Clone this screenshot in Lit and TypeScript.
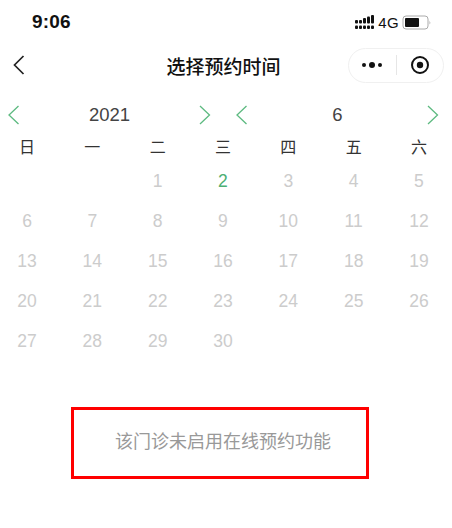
import { LitElement, html, css, svg } from "lit";
import { customElement } from "lit/decorators.js";

const chevL = svg`<path d="M10.5 1 L1 10 L10.5 19" fill="none" stroke="#5dba80" stroke-width="1.3"/>`;
const chevR = svg`<path d="M1 1 L10.5 10 L1 19" fill="none" stroke="#5dba80" stroke-width="1.3"/>`;

@customElement("app-root")
export class AppRoot extends LitElement {
  static styles = css`
    :host { display: block; width: 452px; height: 528px; background: #fff; overflow: hidden;
      font-family: "Liberation Sans", "Noto Sans CJK SC", sans-serif; }
    .status { height: 44px; display: flex; align-items: center; box-sizing: border-box; padding: 0 20px 0 32px; }
    .time { font-size: 19px; font-weight: 700; color: #111; letter-spacing: 0.2px; flex: 1; }
    .status-right { display: flex; align-items: center; }
    .net { font-size: 15px; color: #111; letter-spacing: 0.4px; margin: 0 3px 0 4px; }
    .nav { height: 44px; margin-top: -1px; display: flex; align-items: center; box-sizing: border-box; padding: 0 8px 0 13px; position: relative; }
    .nav .spacer { flex: 1; }
    .title { position: absolute; left: 0; right: 0; text-align: center; font-size: 19px; font-weight: 500; color: #111; padding-right: 5px; }
    .capsule { box-sizing: border-box; width: 96px; height: 35px; border: 1px solid #f0f0f0; border-radius: 18px; display: flex; align-items: center; position: relative; background: #fff; }
    .capsule .half { flex: 1; display: flex; justify-content: center; align-items: center; }
    .capsule .sep { width: 1px; height: 20px; background: #e6e6e6; }
    .pickers { display: flex; height: 38px; align-items: center; margin-top: 9px; padding: 0 8px; }
    .picker { display: flex; align-items: center; justify-content: space-between; width: 203px; }
    .picker + .picker { margin-left: 25px; }
    .picker span { font-size: 18.5px; color: #444; }
    .grid { display: grid; grid-template-columns: repeat(7, 54px); column-gap: 11.33px; grid-template-rows: 28px; grid-auto-rows: 39.9px; }
    .cell { display: flex; align-items: center; justify-content: center; font-size: 17.5px; color: #ccc; }
    .head { box-sizing: border-box; padding-bottom: 4px; color: #333; font-size: 16px; }
    .today { color: #4caf73; }
    .notice { box-sizing: border-box; width: 298px; height: 72px; margin: 46px 0 0 71px; border: 3px solid #f00; display: flex; align-items: center; justify-content: center; color: #999; font-size: 18px; padding: 0 0 6px 6px; }
  `;

  render() {
    const heads = ["日", "一", "二", "三", "四", "五", "六"];
    const days: string[] = ["", "", ...Array.from({ length: 30 }, (_, i) => String(i + 1))];
    return html`
      <div class="status">
        <div class="time">9:06</div>
        <div class="status-right">
          <svg width="19" height="15" viewBox="0 0 19 15" fill="#111">
            <rect x="0" y="5" width="3" height="3.6" rx="1"/><rect x="0" y="10.5" width="3" height="3.6" rx="1"/>
            <rect x="4" y="5" width="3" height="3.6" rx="1"/><rect x="4" y="10.5" width="3" height="3.6" rx="1"/>
            <rect x="8" y="3" width="3" height="5.6" rx="1"/><rect x="8" y="10.5" width="3" height="3.6" rx="1"/>
            <rect x="12" y="1.5" width="3" height="7.1" rx="1"/><rect x="12" y="10.5" width="3" height="3.6" rx="1"/>
            <rect x="16" y="0" width="3" height="8.6" rx="1"/><rect x="16" y="10.5" width="3" height="3.6" rx="1"/>
          </svg>
          <span class="net">4G</span>
          <svg width="30" height="15" viewBox="0 0 30 15">
            <rect x="1" y="1" width="25" height="13" rx="3" fill="none" stroke="#aaa" stroke-width="1"/>
            <rect x="3" y="3" width="14" height="9" rx="1" fill="#111"/>
            <path d="M27.5 5.5 q1.5 2 0 4z" fill="#aaa"/>
          </svg>
        </div>
      </div>
      <div class="nav">
        <svg width="12" height="20" viewBox="0 0 12 20"><path d="M10.5 1 L1.5 10 L10.5 19" fill="none" stroke="#222" stroke-width="1.7"/></svg>
        <div class="title">选择预约时间</div>
        <div class="spacer"></div>
        <div class="capsule">
          <div class="half">
            <svg width="22" height="8" viewBox="0 0 22 8" fill="#111"><circle cx="3" cy="4" r="2"/><circle cx="11" cy="4" r="3"/><circle cx="19" cy="4" r="2"/></svg>
          </div>
          <div class="sep"></div>
          <div class="half">
            <svg width="20" height="20" viewBox="0 0 20 20"><circle cx="10" cy="10" r="8" fill="none" stroke="#111" stroke-width="2"/><circle cx="10" cy="10" r="3.2" fill="#111"/></svg>
          </div>
        </div>
      </div>
      <div class="pickers">
        <div class="picker">
          <svg width="12" height="20" viewBox="0 0 12 20">${chevL}</svg>
          <span>2021</span>
          <svg width="12" height="20" viewBox="0 0 12 20">${chevR}</svg>
        </div>
        <div class="picker">
          <svg width="12" height="20" viewBox="0 0 12 20">${chevL}</svg>
          <span>6</span>
          <svg width="12" height="20" viewBox="0 0 12 20">${chevR}</svg>
        </div>
      </div>
      <div class="grid">
        ${heads.map((h) => html`<div class="cell head">${h}</div>`)}
        ${days.map((d) => html`<div class="cell ${d === "2" ? "today" : ""}">${d}</div>`)}
      </div>
      <div class="notice">该门诊未启用在线预约功能</div>
    `;
  }
}
